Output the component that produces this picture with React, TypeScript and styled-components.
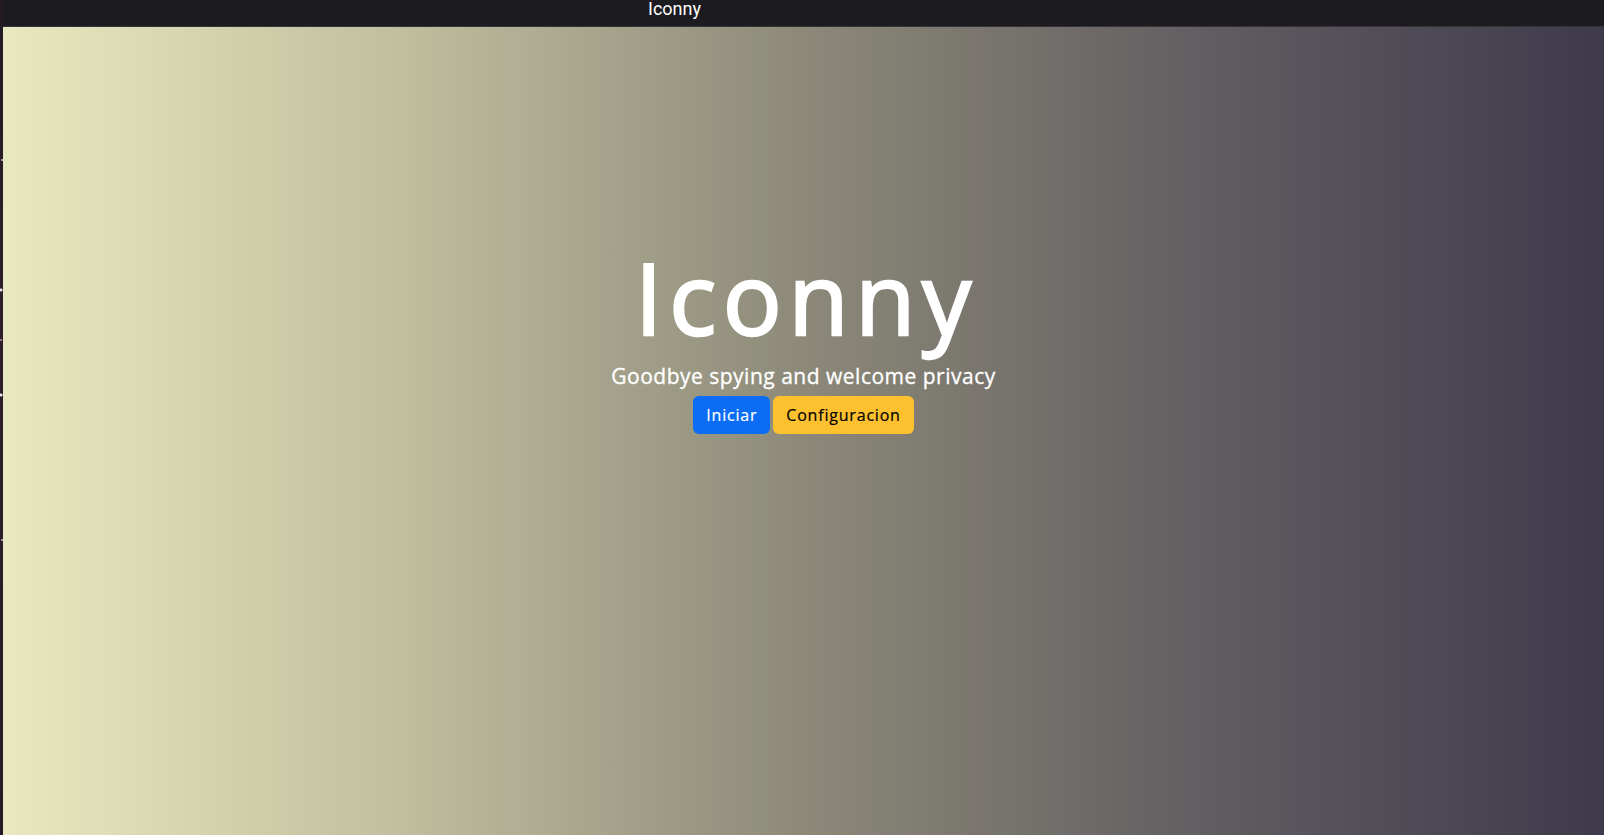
import React from "react";
import styled, { createGlobalStyle } from "styled-components";

const GlobalStyle = createGlobalStyle`
  html, body {
    margin: 0;
    padding: 0;
    height: 100%;
    overflow: hidden;
  }
  body {
    font-family: "Open Sans", "Noto Sans", sans-serif;
  }
  #root {
    height: 100%;
  }
`;

const Screen = styled.div`
  display: flex;
  width: 1604px;
  height: 835px;
  background: #1c1b20;
`;

const Wallpaper = styled.div`
  width: 3px;
  flex: none;
  background:
    radial-gradient(circle at 1px 290px, #e8dfe8 0 1px, transparent 2px),
    radial-gradient(circle at 1px 395px, #f0e8f0 0 1px, transparent 2px),
    radial-gradient(circle at 2px 160px, #b88c90 0 1px, transparent 1.5px),
    radial-gradient(circle at 1px 340px, #a07880 0 1px, transparent 1.5px),
    radial-gradient(circle at 2px 540px, #b08890 0 1px, transparent 1.5px),
    linear-gradient(180deg, #241a22 0%, #2c1f2a 40%, #261c26 100%);
`;

const Window = styled.div`
  flex: 1;
  display: flex;
  flex-direction: column;
  min-width: 0;
`;

const TitleBar = styled.header`
  height: 26px;
  flex: none;
  display: flex;
  align-items: flex-start;
  padding-left: 645px;
  background: #1c1b20;
  border-bottom: 1px solid #34333a;
`;

const WindowTitle = styled.span`
  font-family: Roboto, "Liberation Sans", sans-serif;
  font-size: 18px;
  line-height: 18px;
  color: #ffffff;
`;

const Content = styled.main`
  flex: 1;
  display: flex;
  flex-direction: column;
  align-items: center;
  padding-top: 215px;
  background: linear-gradient(
    to right,
    #e8e9c0 0%,
    #bfbe9e 25%,
    #8c8979 50%,
    #625d61 75%,
    #3e3a4b 100%
  );
`;

const Heading = styled.h1`
  margin: 0;
  padding-left: 6px;
  font-family: "Open Sans", sans-serif;
  font-weight: 400;
  font-size: 98px;
  line-height: 110px;
  letter-spacing: 6.7px;
  color: #ffffff;
  -webkit-text-stroke: 2.5px #ffffff;
`;

const Lead = styled.p`
  margin: 10px 0 0;
  font-family: "Open Sans", sans-serif;
  font-size: 21px;
  line-height: 28px;
  letter-spacing: 0.5px;
  color: #ffffff;
  -webkit-text-stroke: 0.3px #ffffff;
`;

const ButtonRow = styled.div`
  display: flex;
  gap: 3px;
  margin-top: 6px;
`;

const Button = styled.button<{ $variant: "primary" | "warning" }>`
  font-family: "Open Sans", sans-serif;
  font-size: 16px;
  line-height: 24px;
  letter-spacing: 0.8px;
  padding: 6px 12px;
  border: 1px solid transparent;
  border-radius: 6px;
  cursor: pointer;
  background: ${(p) => (p.$variant === "primary" ? "#0b6cf6" : "#fdc12f")};
  color: ${(p) => (p.$variant === "primary" ? "#ffffff" : "#000000")};
  -webkit-text-stroke: 0.2px
    ${(p) => (p.$variant === "primary" ? "#ffffff" : "#000000")};
`;

export default function App() {
  return (
    <>
      <GlobalStyle />
      <Screen>
        <Wallpaper />
        <Window>
          <TitleBar>
            <WindowTitle>Iconny</WindowTitle>
          </TitleBar>
          <Content>
            <Heading>Iconny</Heading>
            <Lead>Goodbye spying and welcome privacy</Lead>
            <ButtonRow>
              <Button $variant="primary">Iniciar</Button>
              <Button $variant="warning">Configuracion</Button>
            </ButtonRow>
          </Content>
        </Window>
      </Screen>
    </>
  );
}
